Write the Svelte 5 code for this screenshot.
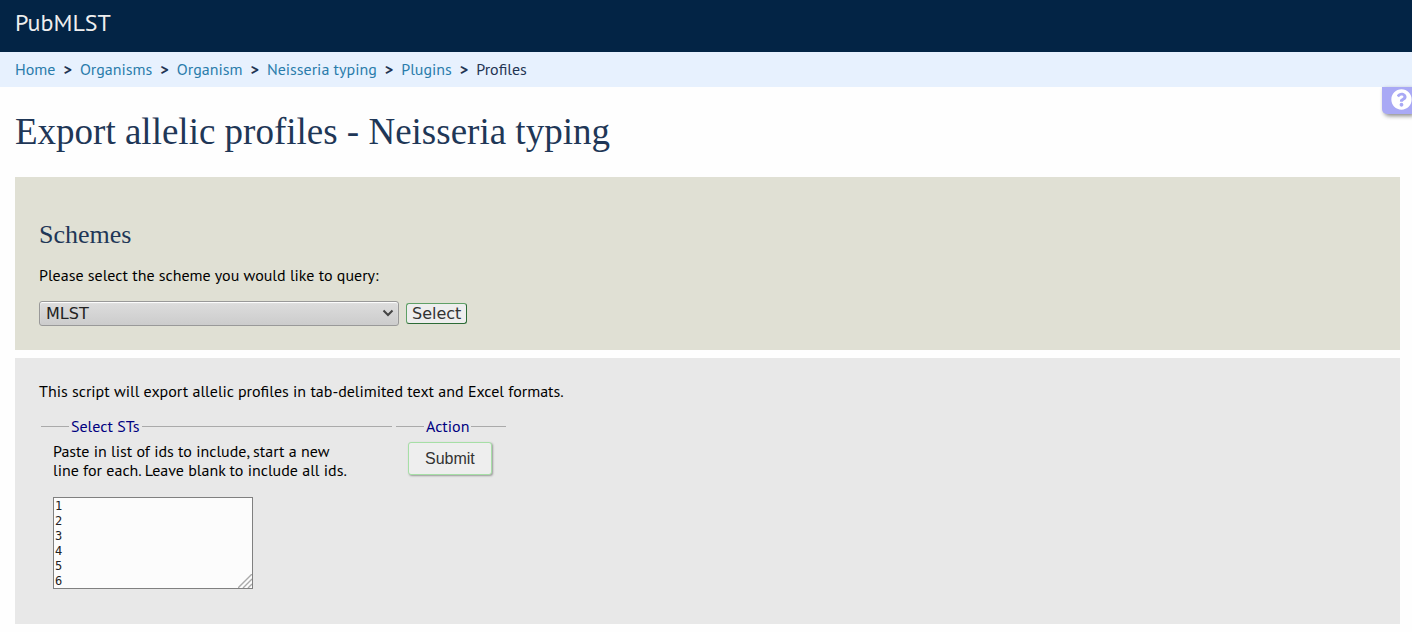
<script>
  const trail = ['Home', 'Organisms', 'Organism', 'Neisseria typing', 'Plugins'];
  let scheme = $state('MLST');
  let ids = $state('1\n2\n3\n4\n5\n6');
</script>

<header>PubMLST</header>

<nav aria-label="Breadcrumb">
  {#each trail as item}
    <a href="#top">{item}</a><span class="sep">&gt;</span>
  {/each}
  <span>Profiles</span>
</nav>

<a class="help" href="#help" aria-label="Help">
  <svg viewBox="0 0 512 512" width="21" height="21" aria-hidden="true">
    <path fill="#fff" d="M504 256c0 137-111 248-248 248S8 393 8 256 119 8 256 8s248 111 248 248zM262.700 90c-54.500 0-89.300 23-116.500 63.800-3.500 5.300-2.400 12.400 2.700 16.300l34.700 26.300c5.200 3.900 12.600 3 16.700-2.100 17.900-22.700 30.100-35.800 57.300-35.800 20.400 0 45.700 13.100 45.700 33 0 15-12.400 22.700-32.500 34C247.100 238.500 216 254.900 216 296v4c0 6.600 5.400 12 12 12h56c6.600 0 12-5.400 12-12v-1.300c0-28.500 83.200-29.600 83.200-106.700 0-58-60.200-102-116.500-102zM256 338c-25.400 0-46 20.600-46 46s20.600 46 46 46 46-20.600 46-46-20.600-46-46-46z" />
  </svg>
</a>

<main>
  <h1>Export allelic profiles - Neisseria typing</h1>

  <section class="panel query">
    <h2>Schemes</h2>
    <p><label for="scheme">Please select the scheme you would like to query:</label></p>
    <div class="row">
      <div class="picker">
        <select id="scheme" bind:value={scheme}>
          <option>MLST</option>
        </select>
        <svg viewBox="0 0 12 8" width="12" height="8" aria-hidden="true">
          <path d="M1.500 1.500 6 6l4.500-4.500" fill="none" stroke="#444" stroke-width="2" />
        </svg>
      </div>
      <button class="select" type="button">Select</button>
    </div>
  </section>

  <section class="panel export">
    <p>This script will export allelic profiles in tab-delimited text and Excel formats.</p>
    <form onsubmit={(e) => e.preventDefault()}>
      <fieldset class="sts">
        <legend>Select STs</legend>
        <label for="ids">Paste in list of ids to include, start a new<br />line for each. Leave blank to include all ids.</label>
        <div class="box">
          <textarea id="ids" bind:value={ids}></textarea>
          <svg viewBox="0 0 14 14" width="14" height="14" aria-hidden="true">
            <path d="M0 14 14 0M5 14 14 5M10 14l4-4" fill="none" stroke="#aaa" stroke-width="1.400" />
          </svg>
        </div>
      </fieldset>
      <fieldset class="action">
        <legend>Action</legend>
        <button class="submit" type="submit">Submit</button>
      </fieldset>
    </form>
  </section>
</main>

<style>
  :global(body) {
    margin: 0;
    background: #fefefe;
    color: #000;
    font: 16px/19px 'PT Sans', 'Noto Sans', sans-serif;
  }
  header {
    box-sizing: border-box;
    height: 52px;
    padding: 8px 15px;
    background: #032445;
    color: #eee;
    font-size: 24px;
    line-height: 30px;
  }
  nav {
    display: flex;
    gap: 8px;
    padding: 8px 15px;
    background: #e7f1fe;
    color: #1f3453;
  }
  nav a {
    color: #2a7cab;
    text-decoration: none;
  }
  .sep {
    font-weight: 700;
  }
  .help {
    position: absolute;
    top: 87px;
    right: 0;
    width: 30px;
    height: 27px;
    box-sizing: border-box;
    padding: 2px 0 0 9px;
    overflow: hidden;
    background: #a9a9f5;
    border-radius: 0 0 0 5px;
    box-shadow: 2px 2px 4px #888;
  }
  .help svg {
    display: block;
  }
  main {
    padding: 24px 12px 8px 15px;
  }
  h1,
  h2 {
    margin: 0;
    color: #1f3757;
    font-family: 'Liberation Serif', serif;
    font-weight: 400;
  }
  h1 {
    margin-bottom: 24px;
    font-size: 37px;
    line-height: 42px;
  }
  h2 {
    margin-bottom: 16px;
    font-size: 26px;
    line-height: 30px;
  }
  p {
    margin: 0;
  }
  .panel {
    padding: 24px;
  }
  .query {
    margin-bottom: 8px;
    padding-top: 43px;
    background: #e0e0d4;
  }
  .row {
    display: flex;
    align-items: center;
    gap: 7px;
    margin-top: 16px;
  }
  .picker {
    position: relative;
    width: 360px;
  }
  .picker svg {
    position: absolute;
    right: 5px;
    top: 8px;
    pointer-events: none;
  }
  select {
    appearance: none;
    display: block;
    box-sizing: border-box;
    width: 100%;
    height: 25px;
    margin: 0;
    padding: 0 6px;
    border: 1px solid #999;
    border-radius: 3px;
    background: linear-gradient(#ddd, #ccc);
    box-shadow: inset 0 1px 1px #fff;
    color: #222;
    font: 16px/20px 'DejaVu Sans', sans-serif;
  }
  button {
    box-sizing: border-box;
    margin: 0;
    background: #eee;
    color: #333;
  }
  .select {
    height: 21px;
    padding: 0 5px;
    border: 1px solid #2c6b36;
    border-top-color: #5fa066;
    border-left-color: #5fa066;
    border-radius: 3px;
    font: 16px/19px 'DejaVu Sans', sans-serif;
  }
  .export {
    padding-bottom: 35px;
    background: #e8e8e8;
  }
  form {
    display: flex;
    align-items: flex-start;
    gap: 4px;
    margin: 16px 2px 0;
  }
  fieldset {
    box-sizing: border-box;
    min-width: 0;
    margin: 0;
    padding: 6px 12px 0;
    border: 0 solid #aaa;
    border-top-width: 1px;
  }
  legend {
    margin-left: 16px;
    padding: 0 2px;
    color: navy;
  }
  .sts {
    width: 351px;
  }
  .action {
    width: 110px;
  }
  .sts label {
    display: block;
    white-space: nowrap;
  }
  .box {
    position: relative;
    width: 200px;
    margin-top: 17px;
  }
  .box svg {
    position: absolute;
    right: 1px;
    bottom: 1px;
    pointer-events: none;
  }
  textarea {
    display: block;
    box-sizing: border-box;
    width: 100%;
    height: 92px;
    margin: 0;
    padding: 1px;
    overflow: hidden;
    resize: none;
    border: 1px solid #808080;
    border-radius: 0;
    background: #fcfcfc;
    color: #222;
    font: 12px/15px 'DejaVu Sans Mono', monospace;
  }
  .submit {
    height: 33px;
    padding: 0 16px;
    border: 1px solid #a6dfa6;
    border-radius: 3px;
    box-shadow: 1px 1px 2px #999;
    font: 16px/20px 'Liberation Sans', sans-serif;
  }
</style>
